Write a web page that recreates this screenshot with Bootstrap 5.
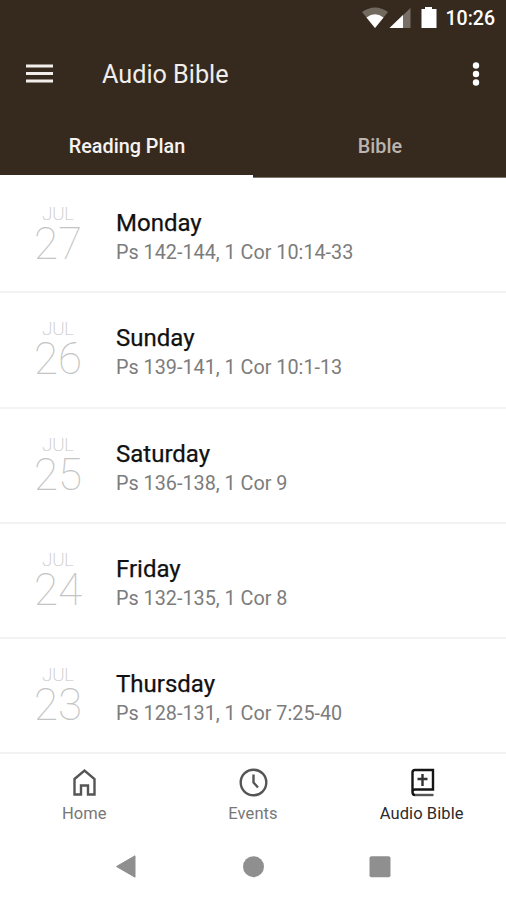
<!DOCTYPE html>
<html lang="en">
<head>
<meta charset="utf-8">
<meta name="viewport" content="width=device-width, initial-scale=1">
<title>Audio Bible</title>
<link href="https://cdn.jsdelivr.net/npm/bootstrap@5.3.0/dist/css/bootstrap.min.css" rel="stylesheet">
<style>
body{font-family:Roboto,"Liberation Sans",sans-serif;height:900px;overflow:hidden;background:#fff}
svg{display:block;flex:none}
.app-head{background:#362a1f;height:178px;color:#f4f2f0;border-bottom:1px solid #7c746d}
.status{height:36px;padding-right:11px}
.clock{font-size:19.5px;font-weight:500;line-height:36px;color:#fff;padding-top:2px}
.title-bar{height:76px;padding:0 26px}
.app-title{font-size:25.2px;line-height:76px;padding-left:49px;font-weight:400;color:#f1eeeb;height:74px}
.tab{font-size:19.8px;font-weight:500;height:66px;line-height:70px;color:#bcb5af;text-decoration:none;padding-left:1px}
.tab.active{color:#f6f3f1;border-bottom:3px solid #fff}
.plan-row{height:115.3px;border-bottom:2px solid #f3f3f3;padding-top:26px}
.date{width:116px;color:#c4c4c4;font-weight:100}
.month{font-size:18.5px;line-height:20px;letter-spacing:-.2px;-webkit-text-stroke:.2px #c8c8c8}
.num{font-size:44px;line-height:40px}
.day{font-size:24px;line-height:28px;font-weight:400;color:#111;padding-top:5px;-webkit-text-stroke:.25px #111}
.verse{font-size:19.8px;line-height:32px;color:#7c7c7c}
.bottom-tabs{height:80px}
.bottom-tabs a{font-size:16.5px;line-height:20px;color:#777;text-decoration:none;padding-top:13px}
.bottom-tabs a.active{color:#2b2b2b}
.bottom-tabs span{margin-top:7px;letter-spacing:.1px}
.sys{height:66px}
</style>
</head>
<body>
<header class="app-head">
  <div class="status d-flex justify-content-end align-items-center">
    <svg width="84" height="36" viewBox="0 0 84 36">
      <path d="M0 12Q13 3 26 12L13 28Z" fill="#72695f"/><path d="M4.500 17.500Q13 11 21.500 17.500L13 28Z" fill="#fff"/>
      <path d="M48.500 8V28H27.500Z" fill="#786f66"/><path d="M41 15V28H27.500Z" fill="#fff"/>
      <path d="M63 7h7v2h4.500v19H59.500V9H63Z" fill="#fff"/>
    </svg>
    <span class="clock">10:26</span>
  </div>
  <div class="title-bar d-flex align-items-center">
    <svg width="27" height="20" viewBox="0 0 27 20"><path d="M0 2H27M0 9.500H27M0 17H27" stroke="#f1eeeb" stroke-width="3"/></svg>
    <h1 class="app-title m-0">Audio Bible</h1>
    <svg class="ms-auto" width="8" height="24" viewBox="0 0 8 24" fill="#fff"><circle cx="4" cy="3.500" r="3.200"/><circle cx="4" cy="12" r="3.200"/><circle cx="4" cy="20.500" r="3.200"/></svg>
  </div>
  <nav class="d-flex text-center">
    <a href="#" class="tab active w-50"><span>Reading Plan</span></a>
    <a href="#" class="tab w-50"><span>Bible</span></a>
  </nav>
</header>
<main>
  <div class="plan-row d-flex"><div class="date text-center"><div class="month">JUL</div><div class="num">27</div></div><div><div class="day"><span>Monday</span></div><div class="verse"><span>Ps 142-144, 1 Cor 10:14-33</span></div></div></div>
  <div class="plan-row d-flex"><div class="date text-center"><div class="month">JUL</div><div class="num">26</div></div><div><div class="day"><span>Sunday</span></div><div class="verse"><span>Ps 139-141, 1 Cor 10:1-13</span></div></div></div>
  <div class="plan-row d-flex"><div class="date text-center"><div class="month">JUL</div><div class="num">25</div></div><div><div class="day"><span>Saturday</span></div><div class="verse"><span>Ps 136-138, 1 Cor 9</span></div></div></div>
  <div class="plan-row d-flex"><div class="date text-center"><div class="month">JUL</div><div class="num">24</div></div><div><div class="day"><span>Friday</span></div><div class="verse"><span>Ps 132-135, 1 Cor 8</span></div></div></div>
  <div class="plan-row d-flex"><div class="date text-center"><div class="month">JUL</div><div class="num">23</div></div><div><div class="day"><span>Thursday</span></div><div class="verse"><span>Ps 128-131, 1 Cor 7:25-40</span></div></div></div>
</main>
<nav class="bottom-tabs row g-0">
  <a href="#" class="col d-flex flex-column align-items-center">
    <svg width="30" height="30" viewBox="0 0 30 30" fill="none" stroke="#555" stroke-width="2.400"><path d="M5.500 12L15.500 3.500L25.500 12V27.500H19V18.500H12V27.500H5.500Z"/></svg><span>Home</span></a>
  <a href="#" class="col d-flex flex-column align-items-center">
    <svg width="30" height="30" viewBox="0 0 30 30" fill="none" stroke="#555" stroke-width="2.400"><circle cx="15.500" cy="15.500" r="12.800"/><path d="M15.500 7.500V15.500L20 20.500"/></svg><span>Events</span></a>
  <a href="#" class="col d-flex flex-column align-items-center active">
    <svg width="30" height="30" viewBox="0 0 30 30" fill="none" stroke="#151515" stroke-width="2.400"><path d="M8 28Q5.500 28 5.500 25V5.500Q5.500 3 8 3H26V22.500H8Q5.500 22.500 5.500 25"/><path d="M15.500 7V19M10.500 12H20.500" stroke="#333"/><path d="M8 28H26.500" stroke="#555"/></svg><span>Audio Bible</span></a>
</nav>
<footer class="sys d-flex justify-content-center">
  <svg width="506" height="66" viewBox="0 0 506 66" fill="#8f8f8f"><path d="M116.500 32.500L135 21.800V43.200Z" stroke="#8f8f8f"/><circle cx="253.500" cy="32.700" r="10.500"/><rect x="369.500" y="22.200" width="21" height="21" rx="2"/></svg>
</footer>
<script src="https://cdn.jsdelivr.net/npm/bootstrap@5.3.0/dist/js/bootstrap.bundle.min.js"></script>
</body>
</html>
